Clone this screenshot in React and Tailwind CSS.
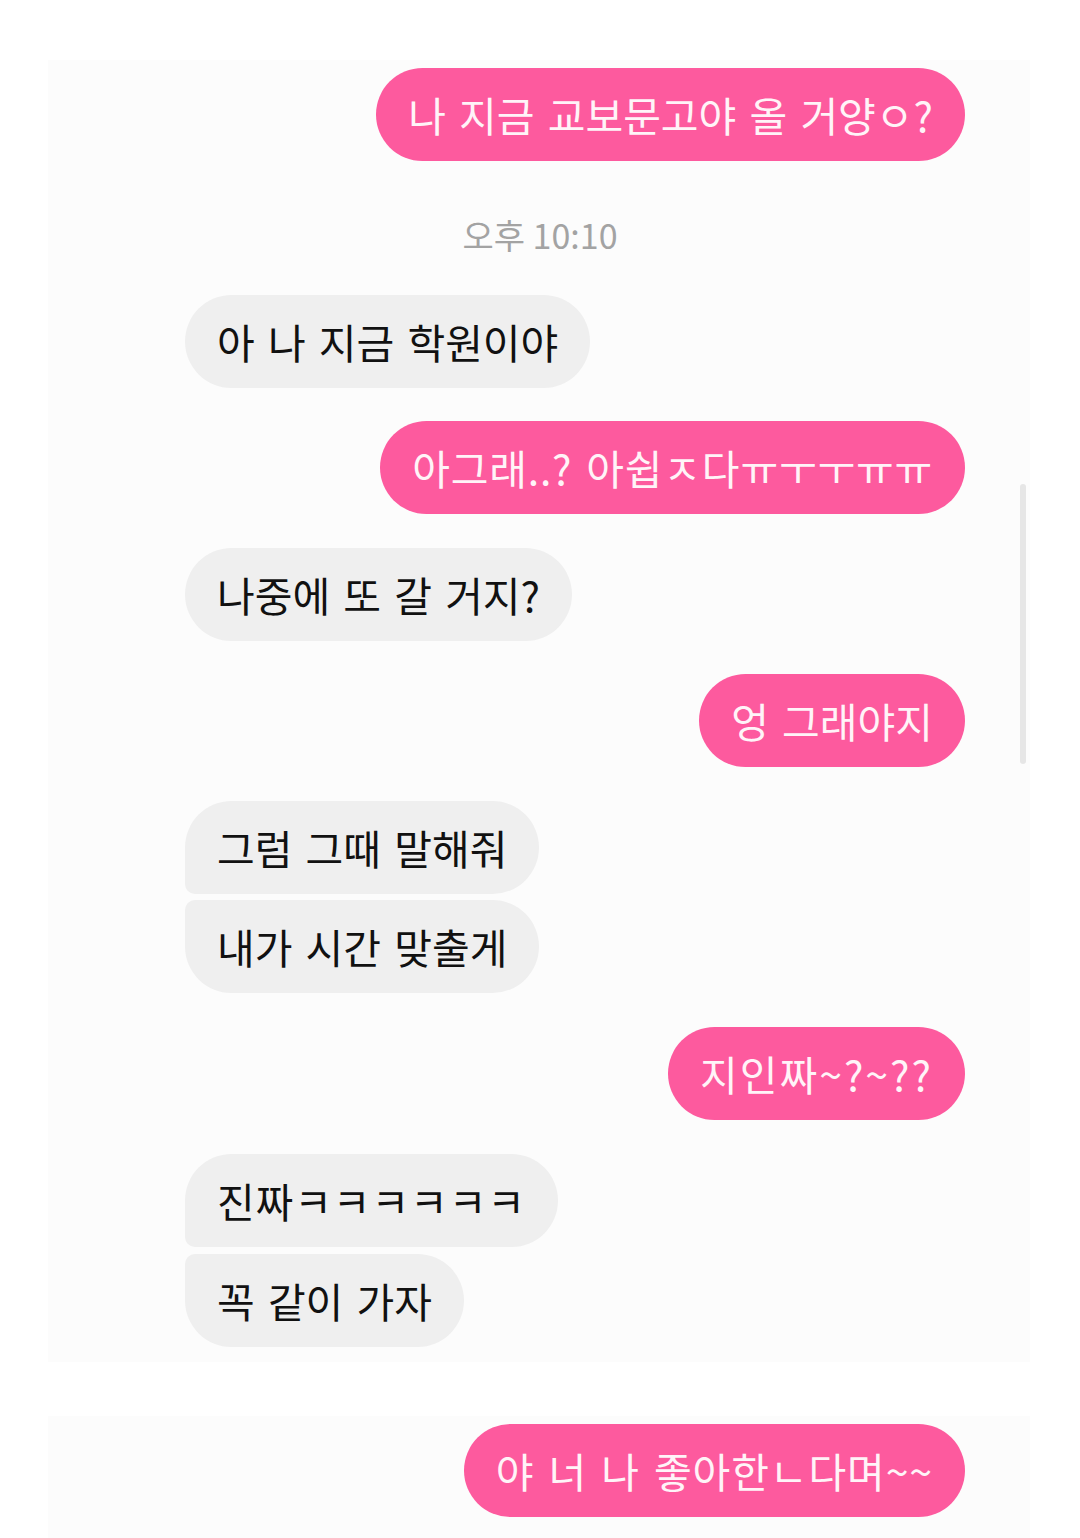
import React from 'react';

const firstBlock = [
    { id: 1, mine: true, text: '나 지금 교보문고야 올 거양ㅇ?', space: 'mt-0' },
    { id: 'time', time: '오후 10:10' },
    { id: 2, mine: false, text: '아 나 지금 학원이야', space: 'mt-0' },
    { id: 3, mine: true, text: '아그래..? 아쉽ㅈ다ㅠㅜㅜㅠㅠ', space: 'mt-[33px]', extra: 'tracking-[0.8px]' },
    { id: 4, mine: false, text: '나중에 또 갈 거지?', space: 'mt-[34px]' },
    { id: 5, mine: true, text: '엉 그래야지', space: 'mt-[33px]' },
    { id: 6, mine: false, text: '그럼 그때 말해줘', space: 'mt-[34px]', shape: 'rounded-[47px] rounded-bl-[10px]' },
    { id: 7, mine: false, text: '내가 시간 맞출게', space: 'mt-[6px]', shape: 'rounded-[47px] rounded-tl-[10px]' },
    { id: 8, mine: true, text: '지인짜~?~??', space: 'mt-[34px]', extra: 'tracking-[2px]' },
    { id: 9, mine: false, text: '진짜ㅋㅋㅋㅋㅋㅋ', space: 'mt-[34px]', shape: 'rounded-[47px] rounded-bl-[10px]', extra: 'tracking-[0.9px]' },
    { id: 10, mine: false, text: '꼭 같이 가자', space: 'mt-[7px]', shape: 'rounded-[47px] rounded-tl-[10px]' },
];

const lastMessage = { id: 11, mine: true, text: '야 너 나 좋아한ㄴ다며~~', space: 'mt-0', extra: 'tracking-[0.9px]' };

const Bubble = ({ msg }) => {
    const shape = msg.shape || 'rounded-full';
    return (
        <div className={`flex ${msg.mine ? 'justify-end' : 'justify-start'} ${msg.space}`}>
            <div
                className={`h-[93px] flex items-center px-[32px] text-[41px] leading-none whitespace-nowrap [word-spacing:4px] ${shape} ${msg.extra || ''} ${
                    msg.mine ? 'bg-[#fd5a9e] text-[#fff4f8]' : 'bg-[#efefef] text-[#111111]'
                }`}
            >
                {msg.text}
            </div>
        </div>
    );
};

export default function App() {
    return (
        <div
            className="relative w-[1080px] h-[1538px] bg-white overflow-hidden pt-[60px]"
            style={{ fontFamily: '"Noto Sans CJK KR", "Noto Sans", sans-serif' }}
        >
            <div className="ml-[48px] w-[982px] bg-[#fcfcfc] pt-[8px] pl-[137px] pr-[65px] pb-[15px]">
                {firstBlock.map((msg) =>
                    msg.time ? (
                        <div key={msg.id} className="pt-[56px] pb-[42px] pr-[70px] text-center text-[34px] leading-[36px] text-[#a3a3a3]">
                            {msg.time}
                        </div>
                    ) : (
                        <Bubble key={msg.id} msg={msg} />
                    )
                )}
            </div>

            <div className="h-[54px]" />

            <div className="ml-[48px] w-[982px] bg-[#fcfcfc] pt-[8px] pl-[137px] pr-[65px] pb-[100px]">
                <Bubble msg={lastMessage} />
            </div>

            {/* scroll indicator */}
            <div className="absolute left-[1020px] top-[484px] w-[6px] h-[280px] rounded-full bg-[#e6e6e6]" />
        </div>
    );
}
